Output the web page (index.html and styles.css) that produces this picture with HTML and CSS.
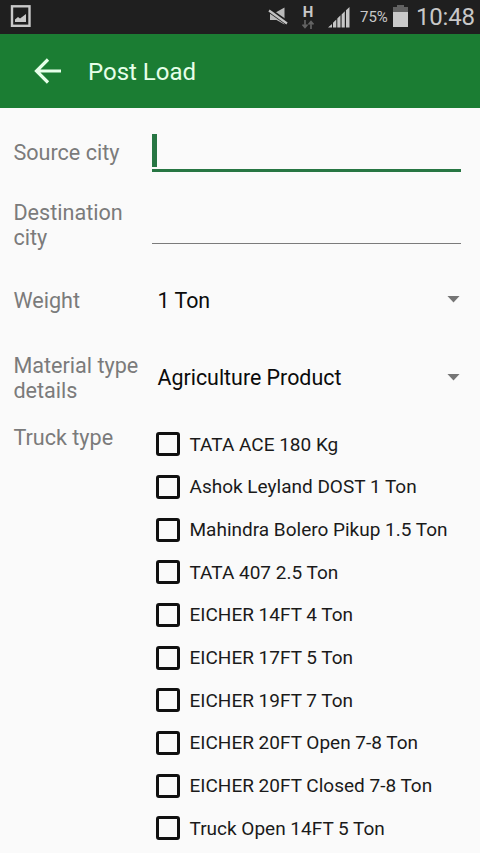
FILE: index.html
```html
<!DOCTYPE html>
<html lang="en">
<head>
<meta charset="utf-8">
<title>Post Load</title>
<link rel="stylesheet" href="styles.css">
</head>
<body>
<div class="status">
  <svg class="shot" width="22" height="24" viewBox="0 0 22 24"><rect x="2" y="2.300" width="17.500" height="19.500" fill="none" stroke="#c9c9c9" stroke-width="2.400"/><path d="M5 18v-2.500l3-2.500 2 1.500 6-4.500V18z" fill="#c9c9c9"/></svg>
  <svg class="mute" width="22" height="20" viewBox="0 0 22 20"><path d="M2 5h6.500L16.500.5v17L8.500 13H2z" fill="#b9b9b9"/><path d="M0 2.500l20 14" stroke="#1f1f1f" stroke-width="4.600"/><path d="M1 3.500l18 13" stroke="#c4c4c4" stroke-width="2.200"/></svg>
  <div class="net"><span class="net-type">H</span><svg width="12" height="9" viewBox="0 0 12 9"><path d="M3 0v7M.5 4.500L3 7.500l2.500-3M9 9V2M6.500 4.500L9 1.500l2.500 3" fill="none" stroke="#636363" stroke-width="1.700"/></svg></div>
  <svg class="signal" width="22" height="22" viewBox="0 0 22 22"><path d="M0 20.500l4-3.500v3.500zM5 20.500v-4.700l3.300-3.300v8zM9.300 20.500v-9l3.200-3.200v12.200zM13.600 20.500V7.500l3.200-3.200v16.200zM18 20.500V3.300L21.500 0v20.500z" fill="#c6c6c6"/></svg>
  <span class="pct">75%</span>
  <svg class="battery" width="15" height="22" viewBox="0 0 15 22"><path d="M0 2h4V0h7v2h4v5H0z" fill="#626262"/><path d="M0 7h15v15H0z" fill="#cacaca"/></svg>
  <span class="clock">10:48</span>
</div>
<header class="bar">
  <svg class="back" width="28" height="26" viewBox="0 0 28 26"><path d="M14 1.500L2.500 13 14 24.500M2.500 13H27" fill="none" stroke="#e6ffe9" stroke-width="3.200"/></svg>
  <h1 class="title">Post Load</h1>
</header>
<main class="form">
  <div class="row source"><span class="label">Source city</span><div class="input focused"><i class="caret"></i></div></div>
  <div class="row destination"><span class="label">Destination city</span><div class="input"></div></div>
  <div class="row weight"><span class="label">Weight</span><div class="select"><span class="value">1 Ton</span><i class="arrow"></i></div></div>
  <div class="row material"><span class="label">Material type details</span><div class="select"><span class="value">Agriculture Product</span><i class="arrow"></i></div></div>
  <div class="row trucks"><span class="label">Truck type</span>
    <ul class="list">
      <li><i class="box"></i><span>TATA ACE 180 Kg</span></li>
      <li><i class="box"></i><span>Ashok Leyland DOST 1 Ton</span></li>
      <li><i class="box"></i><span>Mahindra Bolero Pikup 1.5 Ton</span></li>
      <li><i class="box"></i><span>TATA 407 2.5 Ton</span></li>
      <li><i class="box"></i><span>EICHER 14FT 4 Ton</span></li>
      <li><i class="box"></i><span>EICHER 17FT 5 Ton</span></li>
      <li><i class="box"></i><span>EICHER 19FT 7 Ton</span></li>
      <li><i class="box"></i><span>EICHER 20FT Open 7-8 Ton</span></li>
      <li><i class="box"></i><span>EICHER 20FT Closed 7-8 Ton</span></li>
      <li><i class="box"></i><span>Truck Open 14FT 5 Ton</span></li>
    </ul>
  </div>
</main>
</body>
</html>
```
FILE: styles.css
```css
* { box-sizing: border-box; }
body { margin: 0; height: 853px; overflow: hidden; background: #fafafa; font-family: Roboto, "Liberation Sans", sans-serif; }
svg { display: block; flex: none; }
.status { height: 34px; background: #1f1f1f; display: flex; align-items: flex-start; color: #c8c8c8; white-space: nowrap; }
.shot { margin: 4px 0 0 10px; }
.mute { margin: 7px 0 0 236px; }
.net { width: 14px; margin: 6px 0 0 11px; display: flex; flex-direction: column; align-items: center; gap: 1px; }
.net-type { font-size: 15px; font-weight: 700; line-height: 13px; }
.signal { margin: 7px 0 0 13px; }
.pct { width: 30px; margin: 7px 0 0 10px; font-size: 15px; line-height: 20px; }
.battery { margin: 5px 0 0 3px; }
.clock { margin: 1px 0 0 8px; font-size: 24px; line-height: 32px; letter-spacing: -0.2px; }
.bar { height: 74px; padding-left: 34px; background: #1b7d33; display: flex; align-items: center; }
.title { margin: 1px 0 0 26px; font-size: 24px; font-weight: 400; line-height: 28px; color: #e6ffe9; }
.form { padding: 18px 19px 0 13px; }
.row { display: grid; grid-template-columns: 139px 1fr; }
.label { color: #7b7b7b; font-size: 21.6px; line-height: 25px; padding: 0 12px 0 0.4px; }
.source { height: 46px; }
.source .label { padding-top: 14px; }
.input { border-bottom: 1px solid #7b7b7b; }
.focused { border-bottom: 3px solid #277643; padding-top: 8px; }
.caret { display: block; width: 5px; height: 33px; background: #277643; }
.destination { height: 50px; margin-top: 28px; }
.destination .input { height: 44px; }
.weight { margin-top: 31px; height: 38px; align-items: center; }
.material { margin-top: 34px; height: 50px; align-items: center; }
.material .label { padding-right: 0; }
.material .value { margin-top: -1px; }
.select { display: flex; align-items: center; justify-content: space-between; padding-left: 5.500px; }
.value { color: #0b0b0b; font-size: 21.4px; line-height: 25px; }
.arrow { width: 13px; height: 7px; margin: -2px 1px 0 0; background: #757575; clip-path: polygon(0 0, 100% 0, 50% 100%); }
.trucks { margin-top: 22px; }
.list { list-style: none; margin: -2px 0 0; padding: 0 0 0 4px; }
.list li { height: 42.67px; display: flex; align-items: center; gap: 9.500px; color: #1a1a1a; font-size: 19px; line-height: 22px; white-space: nowrap; }
.list span { padding-top: 1px; }
.box { width: 24px; height: 24px; border: 3px solid #101010; border-radius: 3px; flex: none; }
```
